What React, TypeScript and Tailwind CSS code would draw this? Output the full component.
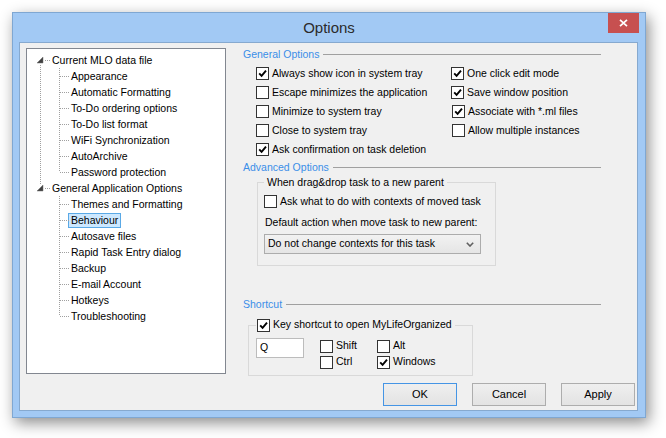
import React from "react";

function Box({ checked }: { checked?: boolean }) {
  return (
    <span className="w-[13px] h-[13px] border border-[#333333] bg-white flex items-center justify-center shrink-0">
      {checked && (
        <svg width="9" height="9" viewBox="0 0 9 9">
          <path d="M1.2 4.3 L3.6 6.8 L8 1.6" stroke="#000" strokeWidth="1.9" fill="none" />
        </svg>
      )}
    </span>
  );
}

function Check({ label, checked, shift }: { label: string; checked?: boolean; shift?: boolean }) {
  return (
    <div className={"flex items-center h-[19px] " + (shift ? "ml-[1px]" : "")}>
      <Box checked={checked} />
      <span className="ml-[3px] whitespace-nowrap">{label}</span>
    </div>
  );
}

function Header({ label }: { label: string }) {
  return (
    <div className="flex items-center h-[14px] leading-[14px]">
      <span className="text-[#3a8ee8] whitespace-nowrap pl-[1px]">{label}</span>
      <span className="flex-1 h-px bg-[#a0a0a0] ml-[4px]" />
    </div>
  );
}

const rootItems = [
  {
    label: "Current MLO data file",
    children: [
      "Appearance",
      "Automatic Formatting",
      "To-Do ordering options",
      "To-Do list format",
      "WiFi Synchronization",
      "AutoArchive",
      "Password protection",
    ],
  },
  {
    label: "General Application Options",
    children: [
      "Themes and Formatting",
      "Behaviour",
      "Autosave files",
      "Rapid Task Entry dialog",
      "Backup",
      "E-mail Account",
      "Hotkeys",
      "Troubleshooting",
    ],
  },
];

function TreeLines() {
  const dot = { stroke: "#a0a0a0", strokeWidth: 1, strokeDasharray: "1 1", shapeRendering: "crispEdges" as const };
  const rootYs = [11, 139];
  const child1 = [27, 43, 59, 75, 91, 107, 123];
  const child2 = [155, 171, 187, 203, 219, 235, 251, 267];
  return (
    <svg className="absolute left-0 top-0 pointer-events-none" width="198" height="324">
      <line x1="13.5" y1="16" x2="13.5" y2="135" {...dot} />
      <line x1="32.5" y1="19" x2="32.5" y2="123" {...dot} />
      <line x1="32.5" y1="147" x2="32.5" y2="267" {...dot} />
      {rootYs.map((y) => (
        <g key={y}>
          <line x1="18" y1={y + 0.5} x2="23" y2={y + 0.5} {...dot} />
          <polygon points={`16,${y - 3} 16,${y + 3} 10,${y + 3}`} fill="#404040" stroke="#707070" strokeWidth="0.5" />
        </g>
      ))}
      {[...child1, ...child2].map((y) => (
        <line key={y} x1="33" y1={y + 0.5} x2="43" y2={y + 0.5} {...dot} />
      ))}
    </svg>
  );
}

function Tree() {
  return (
    <div className="relative mt-[1px] w-[200px] h-[326px] shrink-0 bg-white border border-[#828790] pt-[3px]">
      <TreeLines />
      {rootItems.map((r) => (
        <div key={r.label}>
          <div className="h-[16px] leading-[16px] pl-[25px] whitespace-nowrap">{r.label}</div>
          {r.children.map((c) => (
            <div key={c} className="h-[16px] pl-[41px] flex items-center">
              <span
                className={
                  "h-[15px] leading-[13px] px-[2px] border whitespace-nowrap " +
                  (c === "Behaviour" ? "bg-[#cce8ff] border-[#5aa9e6]" : "border-transparent")
                }
              >
                {c}
              </span>
            </div>
          ))}
        </div>
      ))}
    </div>
  );
}

function Button({ label, def }: { label: string; def?: boolean }) {
  return (
    <div
      className={
        "w-[74px] h-[23px] flex items-center justify-center border bg-gradient-to-b from-[#efefef] to-[#e3e3e3] text-[11px] " +
        (def ? "border-[#4595e5]" : "border-[#adadad]")
      }
    >
      {label}
    </div>
  );
}

function RightPanel() {
  return (
    <div className="ml-[16px] w-[359px] flex flex-col">
      <Header label="General Options" />
      <div className="mt-[3px] grid grid-cols-[195px_1fr] pl-[14px]">
        <div className="flex flex-col">
          <Check label="Always show icon in system tray" checked />
          <Check label="Escape minimizes the application" />
          <Check label="Minimize to system tray" />
          <Check label="Close to system tray" />
          <Check label="Ask confirmation on task deletion" checked />
        </div>
        <div className="flex flex-col">
          <Check label="One click edit mode" checked />
          <Check label="Save window position" checked />
          <Check label="Associate with *.ml files" checked shift />
          <Check label="Allow multiple instances" shift />
        </div>
      </div>
      <div className="mt-[1px]">
        <Header label="Advanced Options" />
      </div>
      <fieldset className="mt-[1px] ml-[15px] w-[239px] border border-[#d9d9d9] pb-[11px]">
        <legend className="ml-[6px] px-[3px] h-[14px] leading-[14px] whitespace-nowrap">
          When drag&amp;drop task to a new parent
        </legend>
        <div className="mt-[3px] ml-[6px] flex items-center h-[19px]">
          <Box />
          <span className="ml-[3px] whitespace-nowrap">Ask what to do with contexts of moved task</span>
        </div>
        <div className="mt-[4px] ml-[7px] h-[14px] leading-[14px] whitespace-nowrap">
          Default action when move task to new parent:
        </div>
        <div className="mt-[5px] ml-[6px] w-[217px] h-[20px] border border-[#acacac] bg-gradient-to-b from-[#f2f2f2] to-[#e5e5e5] flex items-center pl-[3px] pr-[6px]">
          <span className="flex-1 whitespace-nowrap">Do not change contexts for this task</span>
          <svg width="8" height="5" viewBox="0 0 8 5">
            <path d="M0.8 0.8 L4 4 L7.2 0.8" stroke="#606060" strokeWidth="1.6" fill="none" />
          </svg>
        </div>
      </fieldset>
      <div className="mt-[31px]">
        <Header label="Shortcut" />
      </div>
      <fieldset className="mt-[7px] ml-[6px] w-[225px] border border-[#d9d9d9] pb-[5px]">
        <legend className="ml-[7px] px-[1px] h-[14px] flex items-center pr-[3px]">
          <Box checked />
          <span className="ml-[3px] whitespace-nowrap">Key shortcut to open MyLifeOrganized</span>
        </legend>
        <div className="mt-[6px] ml-[7px] flex items-start">
          <div className="w-[48px] h-[20px] border border-[#bcbcbc] bg-white flex items-center pl-[3px]">Q</div>
          <div className="ml-[16px] grid grid-cols-[57px_auto] grid-rows-[16px_16px]">
            <div className="flex items-center">
              <Box />
              <span className="ml-[3px]">Shift</span>
            </div>
            <div className="flex items-center">
              <Box />
              <span className="ml-[3px]">Alt</span>
            </div>
            <div className="flex items-center">
              <Box />
              <span className="ml-[3px]">Ctrl</span>
            </div>
            <div className="flex items-center">
              <Box checked />
              <span className="ml-[3px]">Windows</span>
            </div>
          </div>
        </div>
      </fieldset>
    </div>
  );
}

export default function App() {
  return (
    <div className="w-[666px] h-[438px] bg-white pt-[12px] pl-[12px] font-['Liberation_Sans',Arial,sans-serif] text-[10.5px] text-black">
      <div className="w-[634px] h-[406px] bg-[#a2c9f4] border border-[#7fa7d2] flex flex-col shadow-[3px_5px_14px_rgba(0,0,0,0.45)]">
        <div className="h-[29px] shrink-0 grid grid-cols-[1fr_auto_1fr]">
          <div />
          <div className="self-center text-[15px] text-[#2b2b2b] leading-[18px]">Options</div>
          <div className="flex justify-end items-start">
            <div className="mr-[6px] w-[31px] h-[20px] bg-[#c75050] flex items-center justify-center">
              <svg width="9" height="8" viewBox="0 0 9 8">
                <path d="M1 0.8 L8 7.2 M8 0.8 L1 7.2" stroke="#fff" strokeWidth="1.7" />
              </svg>
            </div>
          </div>
        </div>
        <div className="ml-[6px] mr-[7px] mb-[6px] flex-1 bg-[#f0f0f0] border border-[#86a9cf] pt-[4px] pl-[6px] pr-[2px] flex flex-col">
          <div className="flex items-start">
            <Tree />
            <RightPanel />
          </div>
          <div className="mt-auto mb-[4px] flex justify-end gap-[15px]">
            <Button label="OK" def />
            <Button label="Cancel" />
            <Button label="Apply" />
          </div>
        </div>
      </div>
    </div>
  );
}
